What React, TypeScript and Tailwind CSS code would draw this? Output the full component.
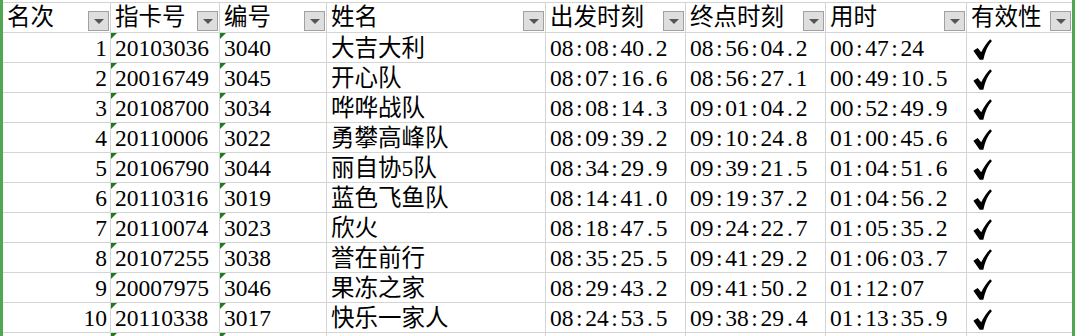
import React from 'react';

interface Row {
  rank: number;
  card: string;
  no: string;
  name: string;
  start: string;
  end: string;
  used: string;
}

const ROWS: Row[] = [
  { rank: 1, card: '20103036', no: '3040', name: '大吉大利', start: '08:08:40.2', end: '08:56:04.2', used: '00:47:24' },
  { rank: 2, card: '20016749', no: '3045', name: '开心队', start: '08:07:16.6', end: '08:56:27.1', used: '00:49:10.5' },
  { rank: 3, card: '20108700', no: '3034', name: '哗哗战队', start: '08:08:14.3', end: '09:01:04.2', used: '00:52:49.9' },
  { rank: 4, card: '20110006', no: '3022', name: '勇攀高峰队', start: '08:09:39.2', end: '09:10:24.8', used: '01:00:45.6' },
  { rank: 5, card: '20106790', no: '3044', name: '丽自协5队', start: '08:34:29.9', end: '09:39:21.5', used: '01:04:51.6' },
  { rank: 6, card: '20110316', no: '3019', name: '蓝色飞鱼队', start: '08:14:41.0', end: '09:19:37.2', used: '01:04:56.2' },
  { rank: 7, card: '20110074', no: '3023', name: '欣火', start: '08:18:47.5', end: '09:24:22.7', used: '01:05:35.2' },
  { rank: 8, card: '20107255', no: '3038', name: '誉在前行', start: '08:35:25.5', end: '09:41:29.2', used: '01:06:03.7' },
  { rank: 9, card: '20007975', no: '3046', name: '果冻之家', start: '08:29:43.2', end: '09:41:50.2', used: '01:12:07' },
  { rank: 10, card: '20110338', no: '3017', name: '快乐一家人', start: '08:24:53.5', end: '09:38:29.4', used: '01:13:35.9' },
];

const HEADERS = ['名次', '指卡号', '编号', '姓名', '出发时刻', '终点时刻', '用时', '有效性'];

const GRID = 'grid grid-cols-[108px_109px_107px_219px_140px_140px_141px_105px]';
const CELL = 'relative flex items-end h-[30px] border-b border-r border-[#d4d4d4] leading-none pb-[2px] whitespace-nowrap';

// half-width monospaced digits like SimSun: pad colon / dot to a digit's width
function Mono({ text }: { text: string }) {
  return (
    <span>
      {text.split('').map((ch, i) =>
        /\d/.test(ch) ? (
          <span key={i}>{ch}</span>
        ) : (
          <span key={i} className="inline-block w-[0.5em] text-center">{ch}</span>
        )
      )}
    </span>
  );
}

function FilterButton() {
  return (
    <div className="ml-auto mb-[-1px] mr-[1px] w-[21px] h-[20px] shrink-0 flex items-center justify-center bg-[#dedede] border border-[#a0a0a0]">
      <div className="w-0 h-0 border-x-[5px] border-x-transparent border-t-[5px] border-t-[#555555]" />
    </div>
  );
}

function TextMark() {
  return (
    <div className="absolute left-0 top-0 w-0 h-0 border-t-[6px] border-t-[#1e7b1e] border-r-[6px] border-r-transparent" />
  );
}

function Check() {
  return (
    <svg width="19" height="21" viewBox="0 0 18 20" className="mb-[0px]">
      <path
        d="M0.3 11.2 L4.4 8.5 L7.8 12.6 C10.4 7.4 13.4 3.2 16.3 0.3 L18 1.8 C14.2 5.8 11.4 11.8 9.8 19.7 L6.3 19.7 Z"
        fill="#000000"
      />
    </svg>
  );
}

export default function App() {
  return (
    <div className="w-[1078px] h-[336px] overflow-hidden bg-white flex text-black text-[23.5px] font-['Liberation_Serif','Noto_Sans_CJK_SC',serif]">
      <div className="w-[3px] bg-[#4fa84f]" />
      <div className="w-[1069px] pt-[2px]">
        <div className={`${GRID} border-t border-[#d4d4d4]`}>
          {HEADERS.map((h, i) => (
            <div key={h} className={`${CELL} h-[29px] pl-[4px] pb-0 ${i === 7 ? 'border-r-0' : ''}`}>
              <span className="pb-[1px]">{h}</span>
              <FilterButton />
            </div>
          ))}
        </div>
        {ROWS.map(r => (
          <div key={r.rank} className={GRID}>
            <div className={`${CELL} justify-end pr-[3px]`}>{r.rank}</div>
            <div className={`${CELL} pl-[4px]`}>
              <TextMark />
              {r.card}
            </div>
            <div className={`${CELL} pl-[4px]`}>
              <TextMark />
              {r.no}
            </div>
            <div className={`${CELL} pl-[4px]`}>{r.name}</div>
            <div className={`${CELL} pl-[4px]`}><Mono text={r.start} /></div>
            <div className={`${CELL} pl-[4px]`}><Mono text={r.end} /></div>
            <div className={`${CELL} pl-[4px]`}><Mono text={r.used} /></div>
            <div className={`${CELL} pl-[6px] border-r-0`}><Check /></div>
          </div>
        ))}
        <div className={GRID}>
          {HEADERS.map((h, i) => (
            <div key={h} className={`${CELL} ${i === 7 ? 'border-r-0' : ''}`}>
              {(i === 1 || i === 2) && <TextMark />}
            </div>
          ))}
        </div>
      </div>
      <div className="w-[3px] bg-[#4fa84f]" />
      <div className="w-[3px] bg-white" />
    </div>
  );
}
